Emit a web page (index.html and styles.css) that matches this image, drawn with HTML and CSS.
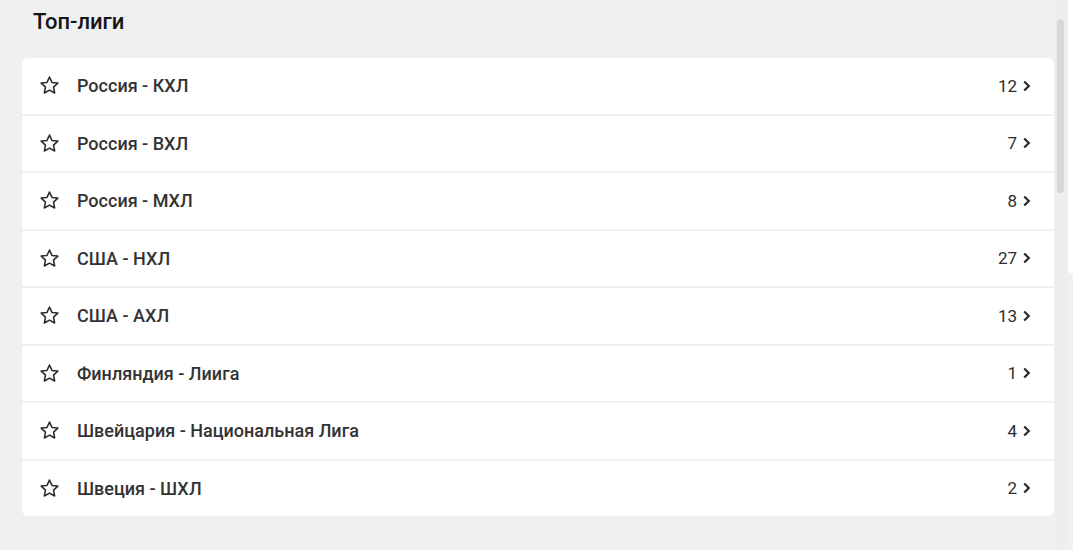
FILE: index.html
```html
<!DOCTYPE html>
<html lang="ru">
<head>
<meta charset="utf-8">
<title>Топ-лиги</title>
<link rel="stylesheet" href="styles.css">
</head>
<body>
<div class="layout">
  <main class="main">
    <h2 class="title">Топ-лиги</h2>
    <ul class="list">
      <li class="row"><svg class="star" viewBox="0 0 24 24"><path d="M12 3.2l2.6 5.6 6.1.7-4.5 4.2 1.2 6.1L12 16.8l-5.4 3 1.2-6.1-4.5-4.2 6.1-.7z"/></svg><span class="name">Россия - КХЛ</span><span class="count">12</span><svg class="chev" viewBox="0 0 8 12"><path d="M2 2l4 4-4 4"/></svg></li>
      <li class="row"><svg class="star" viewBox="0 0 24 24"><path d="M12 3.2l2.6 5.6 6.1.7-4.5 4.2 1.2 6.1L12 16.8l-5.4 3 1.2-6.1-4.5-4.2 6.1-.7z"/></svg><span class="name">Россия - ВХЛ</span><span class="count">7</span><svg class="chev" viewBox="0 0 8 12"><path d="M2 2l4 4-4 4"/></svg></li>
      <li class="row"><svg class="star" viewBox="0 0 24 24"><path d="M12 3.2l2.6 5.6 6.1.7-4.5 4.2 1.2 6.1L12 16.8l-5.4 3 1.2-6.1-4.5-4.2 6.1-.7z"/></svg><span class="name">Россия - МХЛ</span><span class="count">8</span><svg class="chev" viewBox="0 0 8 12"><path d="M2 2l4 4-4 4"/></svg></li>
      <li class="row"><svg class="star" viewBox="0 0 24 24"><path d="M12 3.2l2.6 5.6 6.1.7-4.5 4.2 1.2 6.1L12 16.8l-5.4 3 1.2-6.1-4.5-4.2 6.1-.7z"/></svg><span class="name">США - НХЛ</span><span class="count">27</span><svg class="chev" viewBox="0 0 8 12"><path d="M2 2l4 4-4 4"/></svg></li>
      <li class="row"><svg class="star" viewBox="0 0 24 24"><path d="M12 3.2l2.6 5.6 6.1.7-4.5 4.2 1.2 6.1L12 16.8l-5.4 3 1.2-6.1-4.5-4.2 6.1-.7z"/></svg><span class="name">США - АХЛ</span><span class="count">13</span><svg class="chev" viewBox="0 0 8 12"><path d="M2 2l4 4-4 4"/></svg></li>
      <li class="row"><svg class="star" viewBox="0 0 24 24"><path d="M12 3.2l2.6 5.6 6.1.7-4.5 4.2 1.2 6.1L12 16.8l-5.4 3 1.2-6.1-4.5-4.2 6.1-.7z"/></svg><span class="name">Финляндия - Лиига</span><span class="count">1</span><svg class="chev" viewBox="0 0 8 12"><path d="M2 2l4 4-4 4"/></svg></li>
      <li class="row"><svg class="star" viewBox="0 0 24 24"><path d="M12 3.2l2.6 5.6 6.1.7-4.5 4.2 1.2 6.1L12 16.8l-5.4 3 1.2-6.1-4.5-4.2 6.1-.7z"/></svg><span class="name">Швейцария - Национальная Лига</span><span class="count">4</span><svg class="chev" viewBox="0 0 8 12"><path d="M2 2l4 4-4 4"/></svg></li>
      <li class="row"><svg class="star" viewBox="0 0 24 24"><path d="M12 3.2l2.6 5.6 6.1.7-4.5 4.2 1.2 6.1L12 16.8l-5.4 3 1.2-6.1-4.5-4.2 6.1-.7z"/></svg><span class="name">Швеция - ШХЛ</span><span class="count">2</span><svg class="chev" viewBox="0 0 8 12"><path d="M2 2l4 4-4 4"/></svg></li>
    </ul>
  </main>
  <div class="track"><div class="thumb"></div></div>
  <aside class="side"></aside>
</div>
</body>
</html>
```
FILE: styles.css
```css
html, body {
  margin: 0;
  padding: 0;
  height: 100%;
}
body {
  background: #eff0f2;
  font-family: Roboto, "Liberation Sans", sans-serif;
  color: #2b2b2b;
  overflow: hidden;
}
.layout {
  display: flex;
  align-items: flex-start;
  height: 550px;
}
.main {
  flex: 1;
  padding-left: 22px;
}
.title {
  margin: 0;
  padding: 8px 0 0 11px;
  height: 49px;
  box-sizing: border-box;
  font-size: 22px;
  font-weight: 500;
  line-height: 28px;
  color: #151515;
}
.list {
  list-style: none;
  margin: 0;
  padding: 0;
  display: flex;
  flex-direction: column;
  gap: 2px;
  margin-top: 9px;
}
.row {
  display: flex;
  align-items: center;
  height: 55.5px;
  background: #fff;
  padding: 0 23px 0 16px;
  box-sizing: border-box;
  font-size: 18px;
  font-weight: 500;
}
.row:first-child {
  border-radius: 6px 6px 0 0;
}
.row:last-child {
  border-radius: 0 0 6px 6px;
}
.star {
  width: 23px;
  height: 23px;
  fill: none;
  stroke: #2b2b2b;
  stroke-width: 1.6;
  stroke-linejoin: round;
  flex: none;
}
.name {
  margin-left: 16px;
  flex: 1;
  color: #333;
}
.count {
  font-weight: 400;
  font-size: 17px;
  color: #2e2e2e;
}
.chev {
  width: 9px;
  height: 14px;
  margin-left: 5px;
  fill: none;
  stroke: #2b2b2b;
  stroke-width: 2;
  flex: none;
}
.track {
  width: 14px;
  height: 550px;
  flex: none;
  background: #eceef0;
}
.thumb {
  width: 7px;
  height: 174px;
  margin: 19px 0 0 3px;
  border-radius: 4px;
  background: #d6d8dc;
}
.side {
  width: 5px;
  height: 274px;
  flex: none;
  background: #fff;
  border-bottom-left-radius: 8px;
}
```
